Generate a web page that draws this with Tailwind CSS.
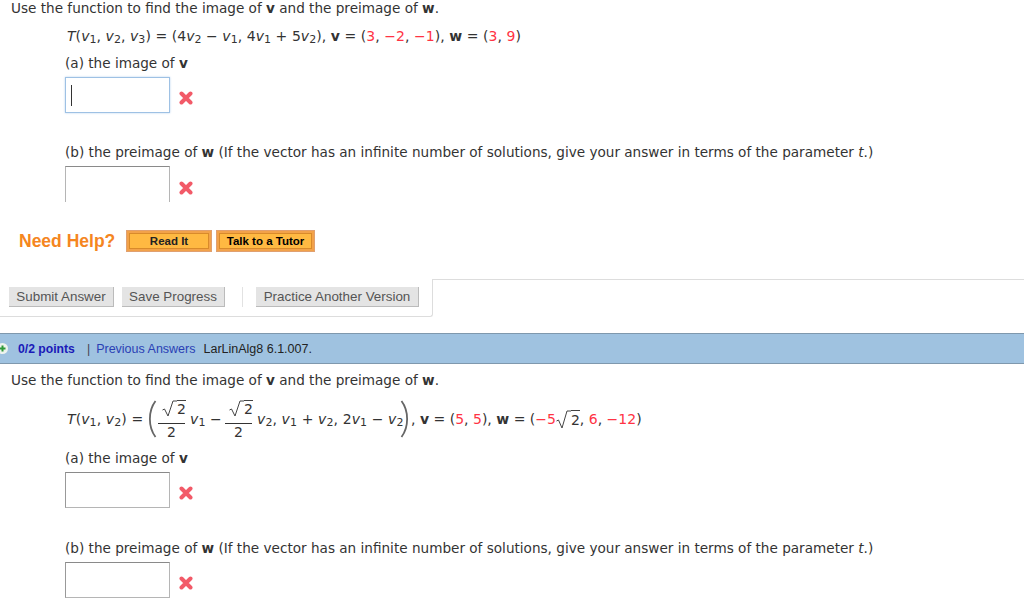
<!DOCTYPE html>
<html lang="en">
<head>
  <meta charset="UTF-8" />
  <title>Question</title>
  <script src="https://cdn.jsdelivr.net/npm/@tailwindcss/browser@4"></script>
</head>
<body class="bg-white">
<div class="w-[1024px] h-[609px] overflow-hidden flex flex-col font-['DejaVu_Sans',sans-serif] text-[13.6px] text-[#333]">

  <!-- Question 1 -->
  <div class="h-[16px] pl-[11px] flex items-center whitespace-pre">Use the function to find the image of <b>v</b> and the preimage of <b>w</b>.</div>
  <div class="h-[28px] mt-[6px] pl-[67px] flex items-center whitespace-pre text-[14px] tracking-[0.05px]"><span><i>T</i>(<i>v</i><sub class="text-[11px]">1</sub>, <i>v</i><sub class="text-[11px]">2</sub>, <i>v</i><sub class="text-[11px]">3</sub>) = (4<i>v</i><sub class="text-[11px]">2</sub> − <i>v</i><sub class="text-[11px]">1</sub>, 4<i>v</i><sub class="text-[11px]">1</sub> + 5<i>v</i><sub class="text-[11px]">2</sub>), <b>v</b> = (<span class="text-[#f34]">3</span>, <span class="text-[#f34]">−2</span>, <span class="text-[#f34]">−1</span>), <b>w</b> = (<span class="text-[#f34]">3</span>, <span class="text-[#f34]">9</span>)</span></div>
  <div class="h-[20px] mt-[3px] pl-[65px] flex items-center whitespace-pre">(a) the image of <b>v</b></div>
  <div class="h-[36px] mt-[4px] pl-[65px] flex">
    <div class="w-[105px] h-[36px] border border-[#9ec1e4] shadow-[0_0_2px_#b8d2ee] pl-[5px] flex items-center"><div class="w-px h-[21px] bg-[#333]"></div></div>
    <svg class="ml-[9px] mt-[14px] w-[14px] h-[14px]" viewBox="0 0 14 14"><path d="M2.5 2.5 L11.5 11.5 M11.5 2.5 L2.5 11.5" stroke="#f25a68" stroke-width="4" stroke-linecap="round"/></svg>
  </div>
  <div class="h-[20px] mt-[29px] pl-[65px] flex items-center whitespace-pre">(b) the preimage of <b>w</b> (If the vector has an infinite number of solutions, give your answer in terms of the parameter <i>t</i>.)</div>
  <div class="h-[36px] mt-[4px] pl-[65px] flex">
    <div class="w-[105px] h-[36px] border border-b-0 border-t-[#8a8a8a] border-x-[#b5b5b5]"></div>
    <svg class="ml-[9px] mt-[15px] w-[14px] h-[14px]" viewBox="0 0 14 14"><path d="M2.5 2.5 L11.5 11.5 M11.5 2.5 L2.5 11.5" stroke="#f25a68" stroke-width="4" stroke-linecap="round"/></svg>
  </div>

  <!-- Need help -->
  <div class="h-[20px] mt-[29px] pl-[19px] flex items-center font-['Liberation_Sans',sans-serif]">
    <span class="text-[17.5px] font-bold text-[#f5861f] w-[107px]">Need Help?</span>
    <div class="w-[86px] h-[22px] bg-[#f2a24a] border border-[#e0a070] p-[2px] flex">
      <div class="flex-1 pt-[1px] bg-[#ffb942] border border-[#d98a2a] flex items-center justify-center text-[11.5px] font-bold text-[#222]">Read It</div>
    </div>
    <div class="ml-[4px] w-[99px] h-[22px] bg-[#f2a24a] border border-[#e0a070] p-[2px] flex">
      <div class="flex-1 pt-[1px] bg-[#ffb942] border border-[#d98a2a] flex items-center justify-center text-[11.5px] font-bold text-black">Talk to a Tutor</div>
    </div>
  </div>

  <!-- Actions -->
  <div class="h-[38px] mt-[28px] flex font-['Liberation_Sans',sans-serif] text-[13.4px] text-[#555]">
    <div class="w-[433px] h-[38px] border-r border-b border-[#ddd] rounded-br-[3px] pl-[9px] pt-[8px] flex items-start">
      <div class="w-[105px] h-[20px] pt-[1px] bg-[#e4e4e4] border-r border-b border-[#bbb] flex items-center justify-center">Submit Answer</div>
      <div class="ml-[8px] w-[103px] h-[20px] pt-[1px] bg-[#e4e4e4] border-r border-b border-[#bbb] flex items-center justify-center">Save Progress</div>
      <div class="ml-[17px] w-px h-[20px] bg-[#e2e2e2]"></div>
      <div class="ml-[13px] w-[163px] h-[20px] pt-[1px] bg-[#e4e4e4] border-r border-b border-[#bbb] flex items-center justify-center">Practice Another Version</div>
    </div>
    <div class="flex-1 border-t border-[#ddd]"></div>
  </div>

  <!-- Question 2 header -->
  <div class="h-[31px] mt-[16px] pt-[1px] bg-[#9fc2e0] border-t border-b border-[#7f98ad] flex items-center font-['Liberation_Sans',sans-serif] text-[12.5px] whitespace-pre relative">
    <svg class="absolute left-[-3px] top-[9px] w-[11px] h-[11px]" viewBox="0 0 11 11"><circle cx="5.5" cy="5.5" r="5.5" fill="#eef3ee"/><path d="M5.5 2.5v6M2.5 5.5h6" stroke="#2e9a3a" stroke-width="2"/></svg>
    <b class="ml-[18px] text-[12.2px] text-[#1a1ab8]">0/2 points</b>
    <span class="ml-[12px] text-[#445]">|</span>
    <span class="ml-[6px] text-[#2a3fb5]">Previous Answers</span>
    <span class="ml-[8px] text-[#222]">LarLinAlg8 6.1.007.</span>
  </div>

  <!-- Question 2 -->
  <div class="h-[16px] mt-[8px] pl-[11px] flex items-center whitespace-pre">Use the function to find the image of <b>v</b> and the preimage of <b>w</b>.</div>
  <div class="h-[50px] mt-[6px] pl-[67px] flex items-center whitespace-pre text-[14px] tracking-[0.1px]">
    <span class="w-[79px]"><i>T</i>(<i>v</i><sub class="text-[11px]">1</sub>, <i>v</i><sub class="text-[11px]">2</sub>) =</span>
    <svg class="w-[11px] h-[38px] mr-[1px]" viewBox="0 0 11 38"><path d="M9.5 1 C2 11 2 27 9.5 37" fill="none" stroke="#666" stroke-width="1.8"/></svg>
    <span class="flex flex-col items-center w-[27px] mr-[5px] mt-[3px] leading-[17px]">
      <span class="border-b border-[#333] w-full flex justify-end items-end pb-[6px] relative">
        <svg class="w-[15px] h-[17px]" viewBox="0 0 15 17"><path d="M0.5 10 L2.5 9 L6 16 L11 1 L15 1" fill="none" stroke="#444" stroke-width="1"/></svg><span class="border-t border-[#444] leading-[16px] -mr-[1px]">2</span>
      </span>
      <span>2</span>
    </span>
    <span class="w-[35px]"><i>v</i><sub class="text-[11px]">1</sub> − </span>
    <span class="flex flex-col items-center w-[27px] mr-[5px] mt-[3px] leading-[17px]">
      <span class="border-b border-[#333] w-full flex justify-end items-end pb-[6px] relative">
        <svg class="w-[15px] h-[17px]" viewBox="0 0 15 17"><path d="M0.5 10 L2.5 9 L6 16 L11 1 L15 1" fill="none" stroke="#444" stroke-width="1"/></svg><span class="border-t border-[#444] leading-[16px] -mr-[1px]">2</span>
      </span>
      <span>2</span>
    </span>
    <span class="w-[143px]"><i>v</i><sub class="text-[11px]">2</sub>, <i>v</i><sub class="text-[11px]">1</sub> + <i>v</i><sub class="text-[11px]">2</sub>, 2<i>v</i><sub class="text-[11px]">1</sub> − <i>v</i><sub class="text-[11px]">2</sub></span>
    <svg class="w-[11px] h-[38px]" viewBox="0 0 11 38"><path d="M1.5 1 C9 11 9 27 1.5 37" fill="none" stroke="#666" stroke-width="1.8"/></svg>
    <span class="flex items-center tracking-normal">, <b>v</b> = (<span class="text-[#f34]">5</span>, <span class="text-[#f34]">5</span>), <b>w</b> = (<span class="text-[#f34]">−5</span><span class="flex items-end"><svg class="w-[15px] h-[19px]" viewBox="0 0 15 19"><path d="M0.5 11 L2.5 10 L6 18 L11 1 L15 1" fill="none" stroke="#444" stroke-width="1"/></svg><span class="border-t border-[#444] leading-[18px]">2</span></span>, <span class="text-[#f34]">6</span>, <span class="text-[#f34]">−12</span>)</span>
  </div>
  <div class="h-[20px] mt-[4px] pl-[65px] flex items-center whitespace-pre">(a) the image of <b>v</b></div>
  <div class="h-[36px] mt-[4px] pl-[65px] flex">
    <div class="w-[105px] h-[36px] border border-t-[#8a8a8a] border-l-[#999] border-r-[#b5b5b5] border-b-[#b5b5b5]"></div>
    <svg class="ml-[9px] mt-[14px] w-[14px] h-[14px]" viewBox="0 0 14 14"><path d="M2.5 2.5 L11.5 11.5 M11.5 2.5 L2.5 11.5" stroke="#f25a68" stroke-width="4" stroke-linecap="round"/></svg>
  </div>
  <div class="h-[20px] mt-[30px] pl-[65px] flex items-center whitespace-pre">(b) the preimage of <b>w</b> (If the vector has an infinite number of solutions, give your answer in terms of the parameter <i>t</i>.)</div>
  <div class="h-[36px] mt-[4px] pl-[65px] flex">
    <div class="w-[105px] h-[36px] border border-t-[#8a8a8a] border-l-[#999] border-r-[#b5b5b5] border-b-[#b5b5b5]"></div>
    <svg class="ml-[9px] mt-[14px] w-[14px] h-[14px]" viewBox="0 0 14 14"><path d="M2.5 2.5 L11.5 11.5 M11.5 2.5 L2.5 11.5" stroke="#f25a68" stroke-width="4" stroke-linecap="round"/></svg>
  </div>
</div>
</body>
</html>
